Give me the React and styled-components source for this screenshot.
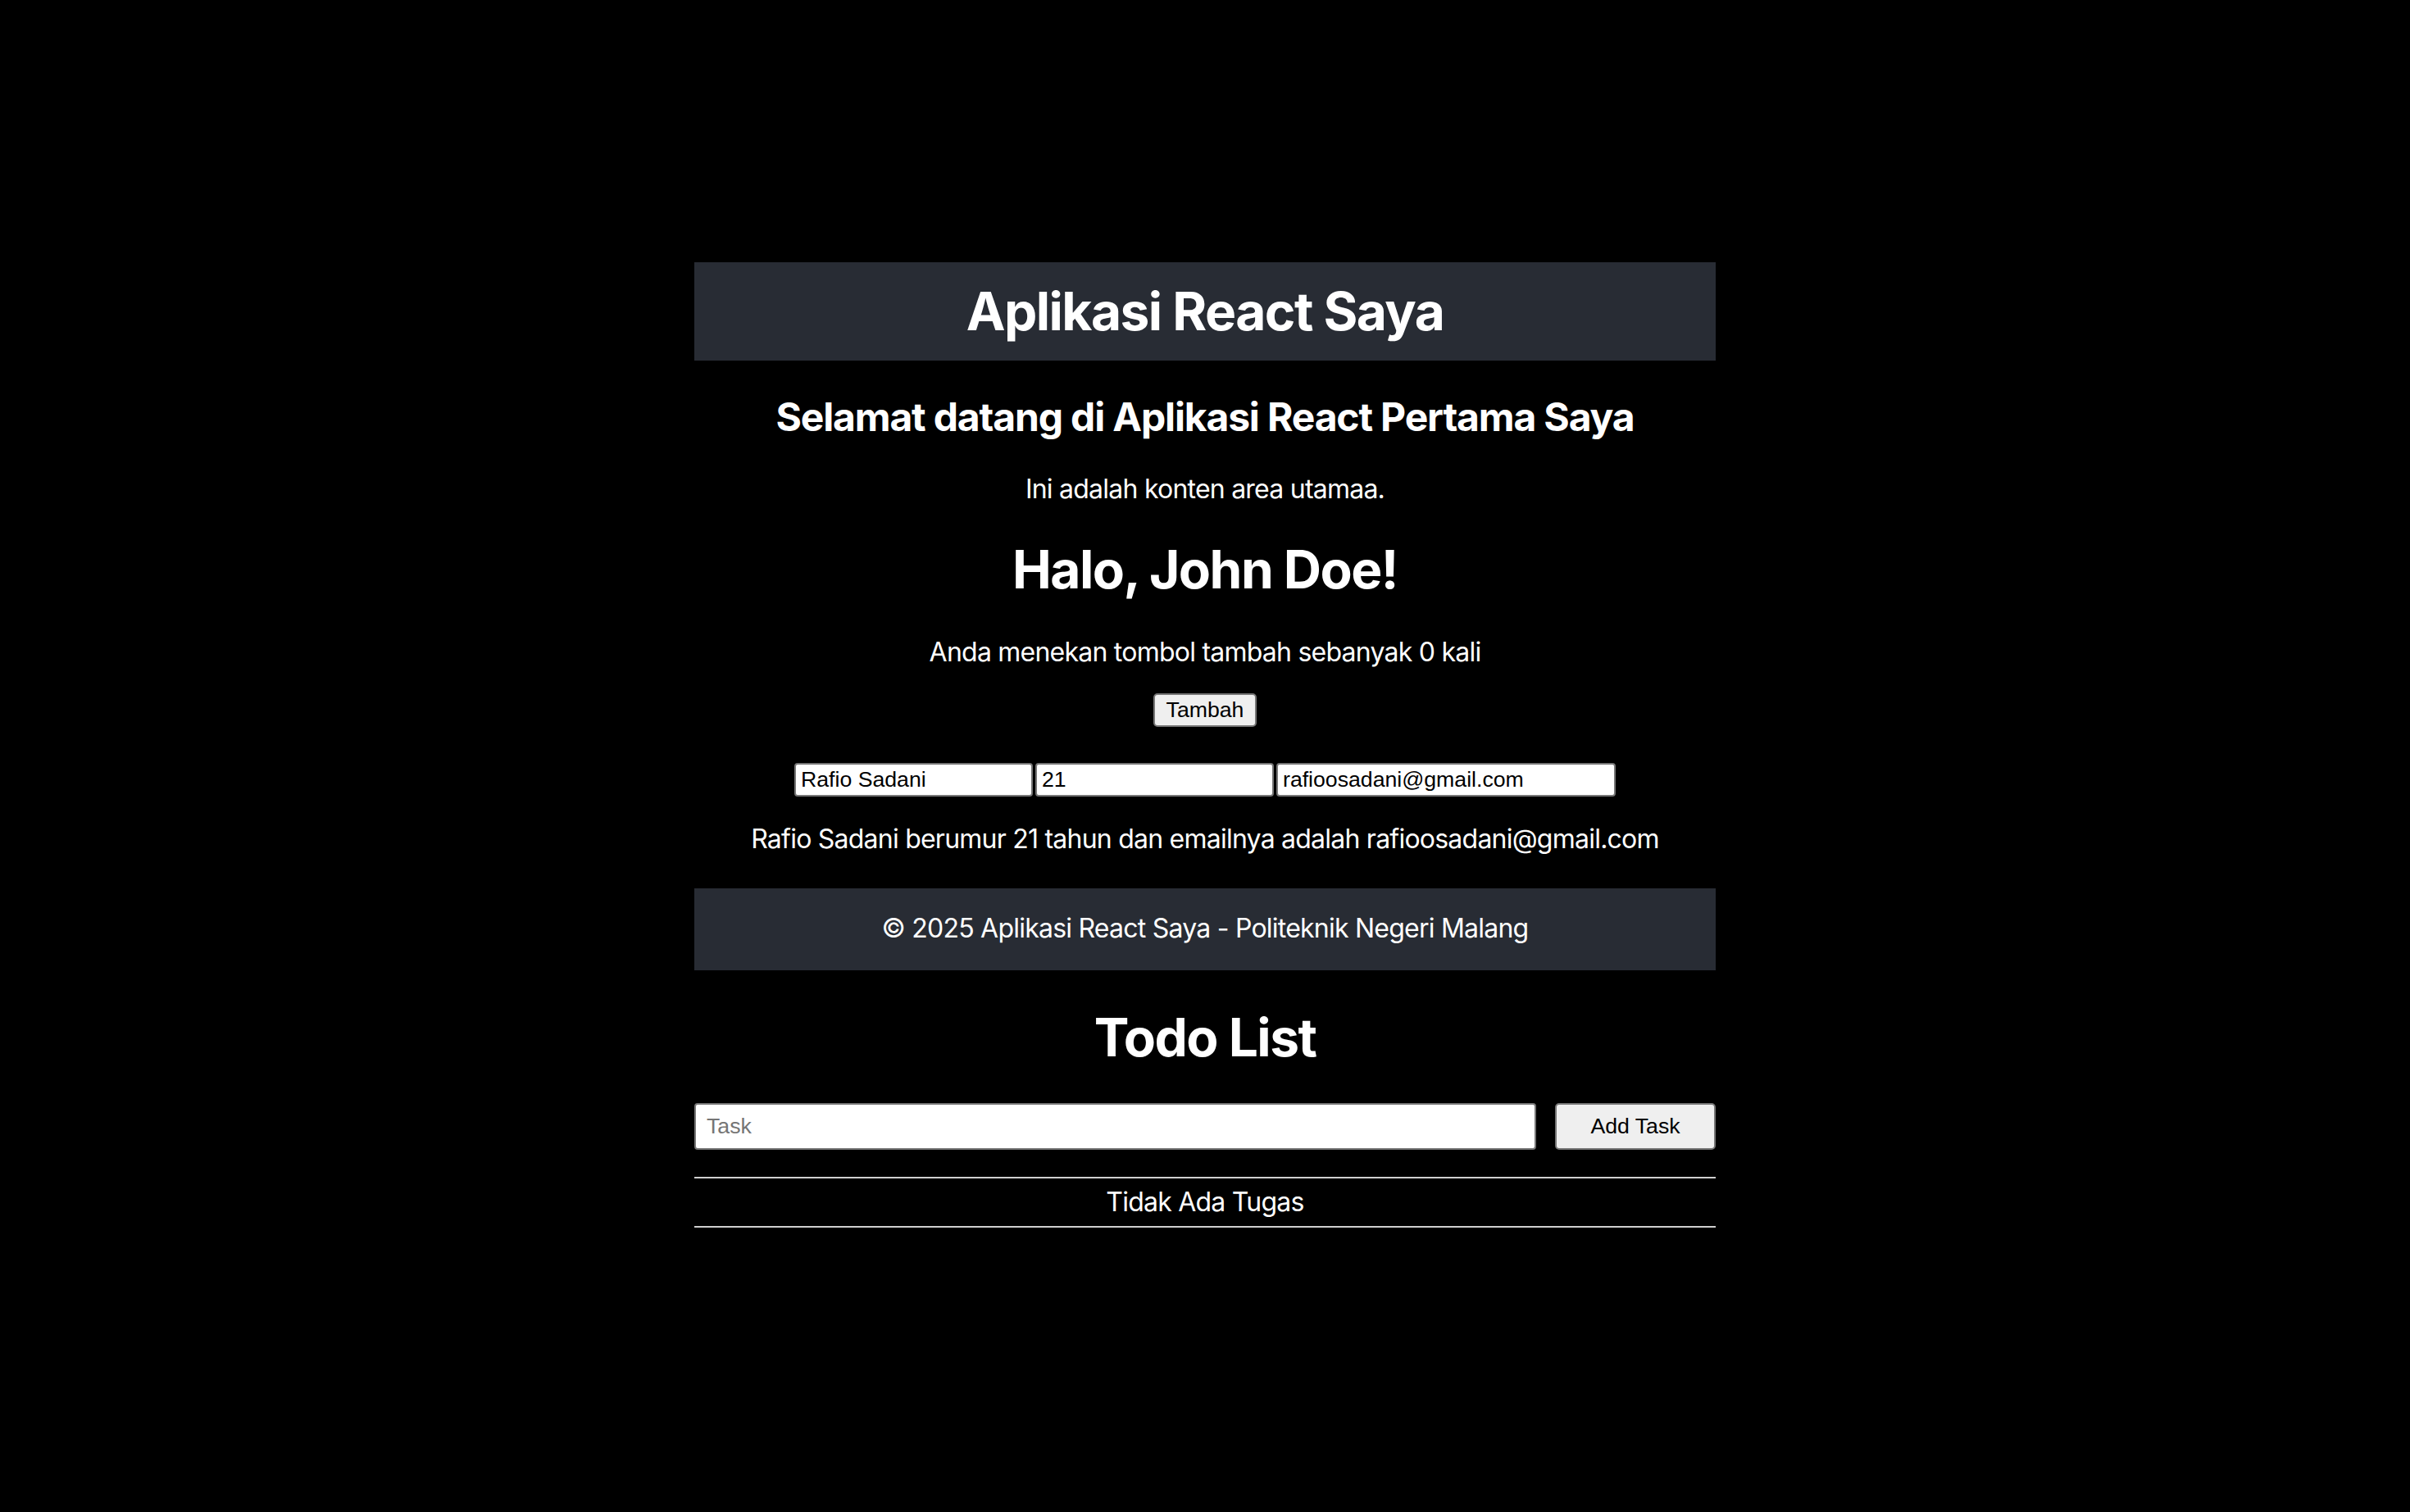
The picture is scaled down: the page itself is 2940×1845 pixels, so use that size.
import React, { useState } from 'react';
import styled, { createGlobalStyle } from 'styled-components';

const GlobalStyle = createGlobalStyle`
  html, body {
    margin: 0;
    background: #000;
  }
  body {
    font-family: Inter, 'Noto Sans', sans-serif;
    color: #fff;
  }
  * {
    box-sizing: border-box;
  }
`;

const Page = styled.div`
  width: 1246px;
  margin: 0 auto;
  padding: 320px 0 300px;
  text-align: center;
`;

const Bar = styled.header`
  height: ${p => p.$height}px;
  margin-top: ${p => p.$top || 0}px;
  display: flex;
  align-items: center;
  justify-content: center;
  background: #282c34;
  font-size: 32px;
  line-height: 1.21;
  letter-spacing: -0.024em;
`;

const Title = styled.h1`
  margin: ${p => p.$top || 0}px 0 0;
  font-size: 64px;
  font-weight: 700;
  line-height: 1.21;
  letter-spacing: -0.024em;
`;

const Subtitle = styled.h2`
  margin: ${p => p.$top || 0}px 0 0;
  font-size: 48px;
  font-weight: 700;
  line-height: 1.21;
  letter-spacing: -0.024em;
`;

const Text = styled.p`
  margin: ${p => p.$top || 0}px 0 0;
  font-size: 32px;
  line-height: 1.21;
  letter-spacing: -0.024em;
`;

const Row = styled.div`
  display: flex;
  justify-content: center;
  gap: ${p => p.$gap || 0}px;
  margin-top: ${p => p.$top || 0}px;
`;

const NativeButton = styled.button`
  height: ${p => p.$height || 41}px;
  width: ${p => (p.$width ? `${p.$width}px` : 'auto')};
  padding: 0 14px;
  font-family: 'Liberation Sans', Arial, sans-serif;
  font-size: 26.67px;
  color: #000;
  background: #efefef;
  border: 2px solid #767676;
  border-radius: 5px;
  cursor: pointer;
`;

const Field = styled.input`
  width: ${p => p.$width}px;
  height: 41px;
  padding: 0 6px;
  font-family: 'Liberation Sans', Arial, sans-serif;
  font-size: 26.67px;
  color: #000;
  background: #fff;
  border: 2px solid #767676;
  border-radius: 4px;
`;

const TaskInput = styled.input`
  flex: 1;
  height: 57px;
  padding: 0 13px;
  font-family: 'Liberation Sans', Arial, sans-serif;
  font-size: 26.67px;
  color: #000;
  background: #fff;
  border: 2px solid #767676;
  border-radius: 4px;

  &::placeholder {
    color: #757575;
  }
`;

const TaskList = styled.ul`
  margin: 33px 0 0;
  padding: 0;
  list-style: none;
  border-top: 2px solid #cfcfcf;
  border-bottom: 2px solid #cfcfcf;
`;

const TaskItem = styled.li`
  padding: 10px 0 9px;
  font-size: 32px;
  line-height: 1.21;
  letter-spacing: -0.024em;
`;

export default function App() {
  const [count, setCount] = useState(0);
  const [name, setName] = useState('Rafio Sadani');
  const [age, setAge] = useState('21');
  const [email, setEmail] = useState('rafioosadani@gmail.com');
  const [task, setTask] = useState('');
  const [tasks, setTasks] = useState([]);

  const addTask = () => {
    if (!task.trim()) return;
    setTasks([...tasks, task.trim()]);
    setTask('');
  };

  return (
    <Page>
      <GlobalStyle />
      <Bar $height={120}>
        <Title>Aplikasi React Saya</Title>
      </Bar>

      <Subtitle $top={40}>Selamat datang di Aplikasi React Pertama Saya</Subtitle>
      <Text $top={40}>Ini adalah konten area utamaa.</Text>

      <Title $top={39}>Halo, John Doe!</Title>
      <Text $top={44}>Anda menekan tombol tambah sebanyak {count} kali</Text>
      <Row $top={30}>
        <NativeButton onClick={() => setCount(count + 1)}>Tambah</NativeButton>
      </Row>

      <Row $top={44} $gap={3}>
        <Field $width={291} value={name} onChange={e => setName(e.target.value)} />
        <Field $width={291} value={age} onChange={e => setAge(e.target.value)} />
        <Field $width={414} value={email} onChange={e => setEmail(e.target.value)} />
      </Row>
      <Text $top={33}>
        {name} berumur {age} tahun dan emailnya adalah {email}
      </Text>

      <Bar as="footer" $height={100} $top={40}>
        © 2025 Aplikasi React Saya - Politeknik Negeri Malang
      </Bar>

      <Title $top={43}>Todo List</Title>
      <Row $top={42} $gap={23}>
        <TaskInput
          placeholder="Task"
          value={task}
          onChange={e => setTask(e.target.value)}
        />
        <NativeButton $width={196} $height={57} onClick={addTask}>
          Add Task
        </NativeButton>
      </Row>
      <TaskList>
        {tasks.length === 0 ? (
          <TaskItem>Tidak Ada Tugas</TaskItem>
        ) : (
          tasks.map((t, i) => <TaskItem key={i}>{t}</TaskItem>)
        )}
      </TaskList>
    </Page>
  );
}
